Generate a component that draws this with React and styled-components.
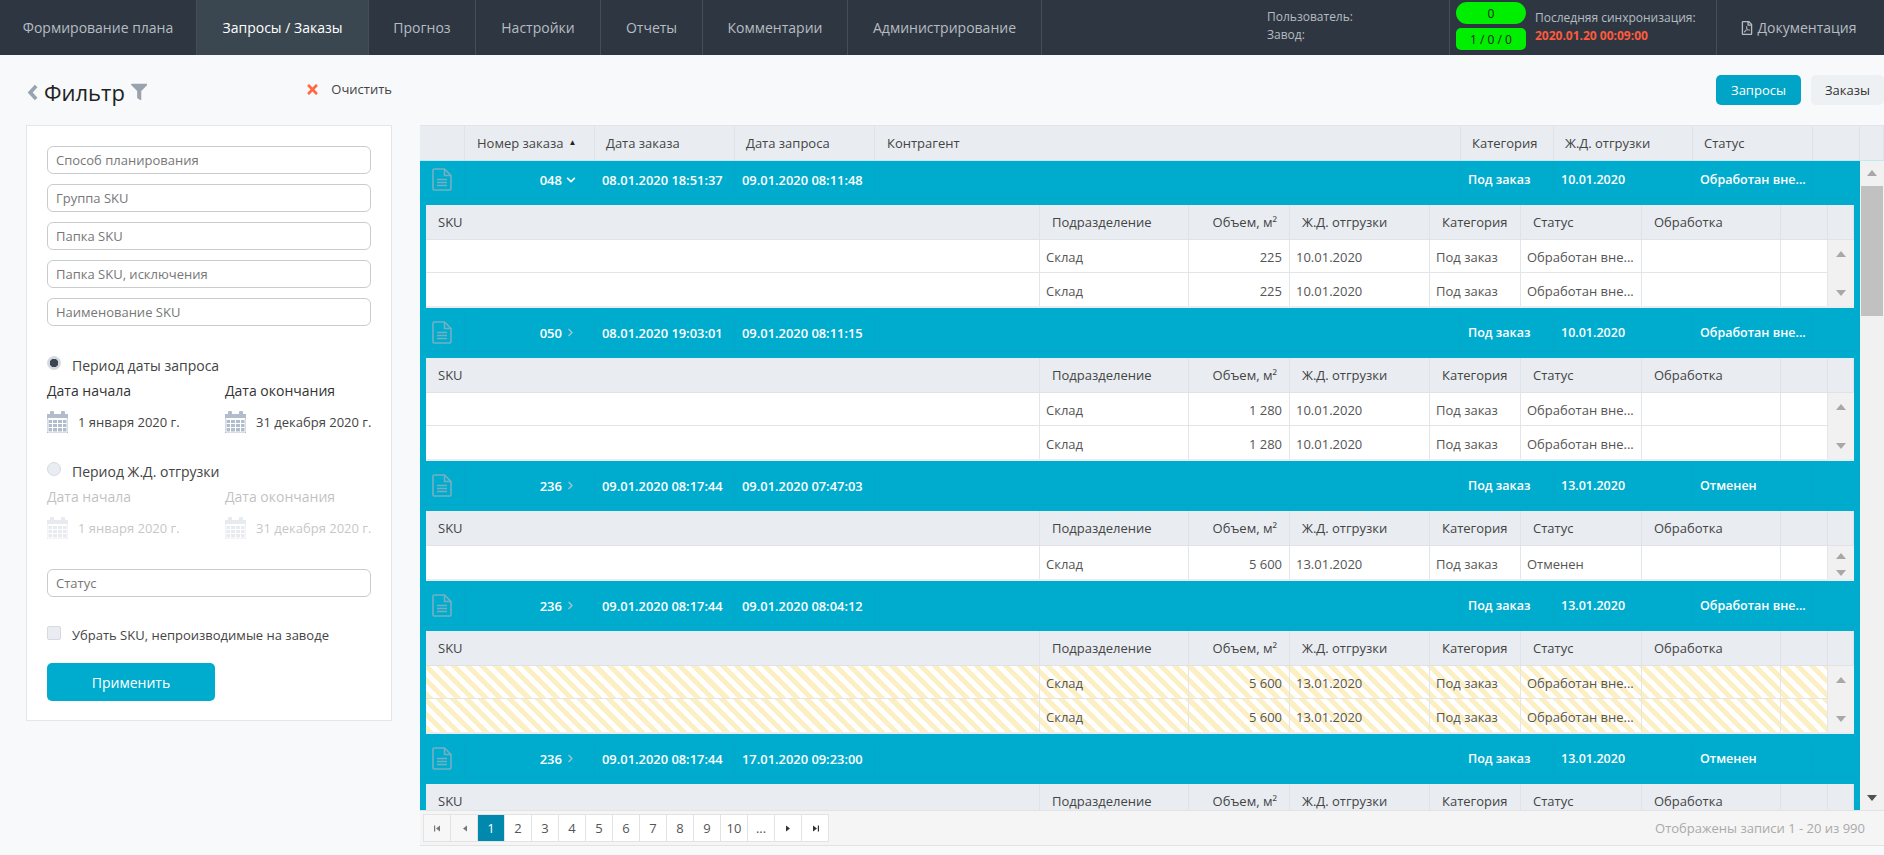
import React from 'react';
import styled, { createGlobalStyle } from 'styled-components';
import { FaChevronDown, FaChevronRight, FaFilter, FaTimes, FaRegFilePdf } from 'react-icons/fa';

const GlobalStyle = createGlobalStyle`
	html, body {
		margin: 0;
		padding: 0;
		background: #f8f9fb;
		font-family: "Open Sans", "Liberation Sans", sans-serif;
		overflow: hidden;
	}
	* { box-sizing: border-box; }
`;

const Page = styled.div`
	width: 1884px;
	height: 855px;
	overflow: hidden;
	display: flex;
	flex-direction: column;
`;

// верхнее меню
const TopBar = styled.div`
	height: 55px;
	flex: none;
	display: flex;
	background: #2e3741;
	color: #b6bcc2;
	font-size: 14px;
`;

const Tab = styled.div`
	width: ${(p) => p.$w}px;
	display: flex;
	align-items: center;
	justify-content: center;
	border-right: 1px solid #444e58;
	background: ${(p) => (p.$active ? '#3a4750' : 'transparent')};
	color: ${(p) => (p.$active ? '#ffffff' : '#b6bcc2')};
	font-weight: ${(p) => (p.$active ? 500 : 400)};
`;

const UserInfo = styled.div`
	width: 408px;
	padding: 8px 0 0 225px;
	font-size: 12px;
	line-height: 18px;
	border-right: 1px solid #444e58;
`;

const Counters = styled.div`
	width: 85px;
	padding: 2px 0 0 6px;
	display: flex;
	flex-direction: column;
	gap: 4px;
`;

const Counter = styled.div`
	width: 70px;
	height: 22px;
	background: #00ee00;
	color: #222;
	border-radius: ${(p) => p.$r}px;
	font-size: 12px;
	display: flex;
	align-items: center;
	justify-content: center;
`;

const Sync = styled.div`
	width: 182px;
	border-right: 1px solid #444e58;
	font-size: 12px;
	padding-top: 9px;
	line-height: 18px;
`;

const SyncDate = styled.div`
	color: #ff5a3c;
	font-weight: 700;
`;

const DocLink = styled.div`
	flex: 1;
	display: flex;
	align-items: center;
	justify-content: center;
	gap: 3px;
	padding-right: 4px;
	font-size: 14px;
`;

const Main = styled.div`
	flex: 1;
	display: flex;
	min-height: 0;
`;

// левая панель фильтра
const Side = styled.div`
	width: 420px;
	flex: none;
	padding: 0 28px 0 26px;
`;

const SideHead = styled.div`
	height: 70px;
	display: flex;
	align-items: center;
	padding: 4px 0 0 1px;
	color: #222;
`;

const FilterTitle = styled.div`
	font-size: 22px;
	margin: 0 6px 0 6px;
`;

const ClearBtn = styled.div`
	display: flex;
	align-items: center;
	gap: 11px;
	margin: 0 0 6px 158px;
	font-size: 13px;
	color: #444;
`;

const FilterPanel = styled.div`
	width: 366px;
	height: 596px;
	background: #fff;
	border: 1px solid #e3e6ea;
	padding: 20px 20px 0;
`;

const TextInput = styled.input`
	display: block;
	width: 324px;
	height: 28px;
	margin-top: ${(p) => p.$top || 0}px;
	margin-bottom: 10px;
	padding: 0 8px;
	border: 1px solid #c9cccf;
	border-radius: 6px;
	outline: none;
	font: 13px "Open Sans", sans-serif;
	background: #fff;
	&::placeholder {
		color: #777;
		opacity: 1;
	}
`;

const RadioRow = styled.label`
	display: flex;
	align-items: center;
	height: 18px;
	margin-top: ${(p) => p.$top}px;
	font-size: ${(p) => p.$size || 14}px;
	color: #444;
	gap: 11px;
`;

const Radio = styled.span`
	width: 14px;
	height: 14px;
	margin-top: -5px;
	border-radius: 50%;
	border: 1px solid #d6dae0;
	background: ${(p) => (p.$on ? 'radial-gradient(circle, #3b4450 0 4px, #d4d8de 4.5px)' : '#e9edf2')};
`;

const Check = styled.span`
	width: 14px;
	height: 14px;
	margin-top: -5px;
	border-radius: 2px;
	border: 1px solid #d6dae0;
	background: #e9edf2;
`;

const DateGrid = styled.div`
	display: grid;
	grid-template-columns: 178px 1fr;
	margin-top: 8px;
	opacity: ${(p) => (p.$off ? 0.3 : 1)};
`;

const DateLabel = styled.div`
	font-size: 14px;
	line-height: 18px;
	color: #333;
`;

const DateValue = styled.div`
	display: flex;
	align-items: center;
	height: 22px;
	margin-top: 11px;
	font-size: 13px;
	color: #444;
	gap: 10px;
	white-space: nowrap;
`;

const ApplyBtn = styled.div`
	width: 168px;
	height: 38px;
	margin-top: 19px;
	background: #00acce;
	color: #fff;
	border-radius: 5px;
	font-size: 14px;
	font-weight: 500;
	display: flex;
	align-items: center;
	justify-content: center;
`;

// правая часть с таблицей
const Content = styled.div`
	flex: 1;
	min-width: 0;
	display: flex;
	flex-direction: column;
`;

const ModeBar = styled.div`
	height: 70px;
	flex: none;
	display: flex;
	gap: 10px;
	padding: 20px 0 0 1296px;
`;

const ModeBtn = styled.div`
	width: ${(p) => p.$w}px;
	flex: none;
	height: 30px;
	border-radius: 5px;
	background: ${(p) => (p.$active ? '#00a4c6' : '#eef1f4')};
	color: ${(p) => (p.$active ? '#fff' : '#333')};
	font-size: 13px;
	display: flex;
	align-items: center;
	justify-content: center;
`;

const HeadRow = styled.div`
	height: 36px;
	flex: none;
	display: flex;
	background: #e9edf2;
	border-top: 1px solid #e1e4e8;
	border-bottom: 1px solid #c4e8f1;
`;

const HeadCell = styled.div`
	width: ${(p) => p.$w}px;
	flex: ${(p) => (p.$w ? 'none' : 1)};
	padding: 0 ${(p) => p.$pad ?? 11}px;
	display: flex;
	align-items: center;
	gap: 5px;
	justify-content: ${(p) => (p.$right ? 'flex-end' : 'flex-start')};
	font-size: 13px;
	color: #444;
	border-right: 1px solid #dfe3e8;
	white-space: nowrap;
`;

const SortMark = styled.span`
	font-size: 8px;
	color: #222;
	margin-bottom: 3px;
`;

const BodyArea = styled.div`
	height: 649px;
	flex: none;
	display: flex;
`;

const Scroller = styled.div`
	width: 1440px;
	overflow: hidden;
	background: #00acce;
`;

const OrderRow = styled.div`
	display: flex;
	height: 38px;
	margin-top: ${(p) => (p.$first ? 0 : 6)}px;
	margin-bottom: 6px;
	border-bottom: 1px solid #08a5c6;
`;

const OrderCell = styled.div`
	width: ${(p) => p.$w}px;
	flex: none;
	padding: 0 6px 0 7px;
	display: flex;
	align-items: center;
	gap: 5px;
	border-right: 1px solid #08a5c6;
	color: #fff;
	font-size: ${(p) => p.$size || 12.5}px;
	font-weight: 600;
	white-space: nowrap;
`;

const IconCell = styled(OrderCell)`
	justify-content: center;
	padding: 0;
`;

const NumberCell = styled(OrderCell)`
	justify-content: flex-end;
	gap: 4px;
	padding: 0 18px 0 0;
	font-size: 13px;
`;

const ChevronSlot = styled.span`
	width: 10px;
	display: flex;
	align-items: center;
`;

const Nested = styled.div`
	margin: 0 6px;
	background: #e9edf2;
	padding-bottom: 2px;
`;

const NestedHead = styled.div`
	height: 35px;
	display: flex;
	border-bottom: 1px solid #dfe3e8;
`;

const NestedBody = styled.div`
	display: flex;
`;

const NestedRows = styled.div`
	width: 1402px;
`;

const NestedRow = styled.div`
	height: 33px;
	display: flex;
	border-bottom: 1px solid #e3e5e8;
	background: ${(p) =>
		p.$warn
			? 'repeating-linear-gradient(45deg, #fdefc4 0 5px, #ffffff 5px 10px)'
			: '#fff'};
	&:last-child {
		border-bottom: 0;
	}
`;

const NestedCell = styled.div`
	width: ${(p) => p.$w}px;
	flex: none;
	padding: 2px 7px 0 6px;
	display: flex;
	align-items: center;
	justify-content: ${(p) => (p.$right ? 'flex-end' : 'flex-start')};
	border-right: 1px solid #e3e5e8;
	font-size: 13px;
	color: #555;
	white-space: nowrap;
`;

const InnerScroll = styled.div`
	width: 26px;
	display: flex;
	flex-direction: column;
	align-items: center;
	justify-content: space-between;
	padding: ${(p) => (p.$compact ? '7px 0 3px' : '11px 0 10px')};
	background: #f1f1f1;
`;

const ArrowUp = styled.span`
	width: 0;
	height: 0;
	border-left: 5px solid transparent;
	border-right: 5px solid transparent;
	border-bottom: 6px solid ${(p) => p.$c || '#a8a8a8'};
`;

const ArrowDown = styled.span`
	width: 0;
	height: 0;
	border-left: 5px solid transparent;
	border-right: 5px solid transparent;
	border-top: 6px solid ${(p) => p.$c || '#a8a8a8'};
`;

const MainScroll = styled.div`
	width: 24px;
	flex: none;
	display: flex;
	flex-direction: column;
	align-items: center;
	background: #f1f1f1;
	padding: 9px 0;
`;

const Thumb = styled.div`
	width: 22px;
	height: 130px;
	margin-top: 10px;
	background: #c1c1c1;
`;

const Filler = styled.div`
	flex: 1;
`;

const Pager = styled.div`
	height: 36px;
	flex: none;
	display: flex;
	align-items: center;
	justify-content: space-between;
	padding: 0 19px 0 3px;
	background: #f5f5f5;
	border-top: 1px solid #e3e3e3;
	border-bottom: 1px solid #e3e3e3;
`;

const PageList = styled.div`
	display: flex;
	border-left: 1px solid #e3e3e3;
`;

const PageBtn = styled.div`
	width: 27px;
	height: 28px;
	display: flex;
	align-items: center;
	justify-content: center;
	background: ${(p) => (p.$active ? '#0089ac' : p.$muted ? '#f7f7f7' : '#fff')};
	color: ${(p) => (p.$active ? '#fff' : '#555')};
	border: 1px solid #e3e3e3;
	border-left: 0;
	font-size: 13px;
`;

const PagerInfo = styled.div`
	font-size: 13px;
	color: #aaa;
`;

const BackIcon = () => (
	<svg width="12" height="17" viewBox="0 0 12 17" fill="none" stroke="#98a3ae" strokeWidth="4">
		<path d="M10 1.5L3.5 8.5L10 15.5" />
	</svg>
);

const DocIcon = () => (
	<svg width="20" height="23" viewBox="0 0 20 23" fill="none" stroke="#74b0c2" strokeWidth="1.6">
		<path d="M1 2.2C1 1.5 1.5 1 2.2 1H12.5L19 7.5V20.8C19 21.5 18.5 22 17.8 22H2.2C1.5 22 1 21.5 1 20.8Z" />
		<path d="M12.5 1V7.5H19" />
		<path d="M5 11.5H15M5 14.5H15M5 17.5H15" />
	</svg>
);

const CalendarIcon = () => (
	<svg width="21" height="22" viewBox="0 0 21 22">
		<path fill="#b1bdcd" d="M0 3H3V1.5a2 2 0 0 1 4 0V3h7V1.5a2 2 0 0 1 4 0V3h3v19H0Z" />
		<g stroke="#fff" strokeWidth="1">
			<path d="M1.5 8.5H19.5M1.5 12.5H19.5M1.5 16.5H19.5" />
			<path d="M5.5 7V21M10.5 7V21M15.5 7V21" />
		</g>
		<path d="M1 7.5H20V21H1Z" fill="none" stroke="#fff" strokeWidth="1" />
	</svg>
);

const PagerGlyph = ({ dir, bar, color }) => (
	<svg width="9" height="9" viewBox="0 0 9 9" fill={color}>
		{dir === 'left' ? <path d="M7 1.5V7.5L3 4.5Z" /> : <path d="M2 1.5V7.5L6 4.5Z" />}
		{bar && (dir === 'left' ? <rect x="1" y="1.5" width="1.2" height="6" /> : <rect x="6.8" y="1.5" width="1.2" height="6" />)}
	</svg>
);

const topCols = [45, 130, 140, 140, 586, 93, 139, 120, 47];
const innerCols = [614, 149, 101, 140, 91, 121, 139, 47];
const innerTitles = ['SKU', 'Подразделение', 'Объем, м²', 'Ж.Д. отгрузки', 'Категория', 'Статус', 'Обработка', ''];

// у последней группы строки ниже края таблицы, их не видно
const groups = [
	{ num: '048', open: true, order: '08.01.2020 18:51:37', req: '09.01.2020 08:11:48', ship: '10.01.2020', status: 'Обработан вне...', vol: '225', rows: 2 },
	{ num: '050', order: '08.01.2020 19:03:01', req: '09.01.2020 08:11:15', ship: '10.01.2020', status: 'Обработан вне...', vol: '1 280', rows: 2 },
	{ num: '236', order: '09.01.2020 08:17:44', req: '09.01.2020 07:47:03', ship: '13.01.2020', status: 'Отменен', vol: '5 600', rows: 1 },
	{ num: '236', order: '09.01.2020 08:17:44', req: '09.01.2020 08:04:12', ship: '13.01.2020', status: 'Обработан вне...', vol: '5 600', rows: 2, warn: true },
	{ num: '236', order: '09.01.2020 08:17:44', req: '17.01.2020 09:23:00', ship: '13.01.2020', status: 'Отменен', vol: '5 600', rows: 0 },
];

const tabs = [
	['Формирование плана', 197],
	['Запросы / Заказы', 172, true],
	['Прогноз', 107],
	['Настройки', 125],
	['Отчеты', 102],
	['Комментарии', 145],
	['Администрирование', 194],
];

const DateBlock = ({ off }) => (
	<DateGrid $off={off}>
		<DateLabel>Дата начала</DateLabel>
		<DateLabel>Дата окончания</DateLabel>
		<DateValue><CalendarIcon />1 января 2020 г.</DateValue>
		<DateValue><CalendarIcon />31 декабря 2020 г.</DateValue>
	</DateGrid>
);

const OrderGroup = ({ g, first }) => (
	<div>
		<OrderRow $first={first}>
			<IconCell $w={topCols[0]}><DocIcon /></IconCell>
			<NumberCell $w={topCols[1]}>
				{g.num}
				<ChevronSlot>
					{g.open ? <FaChevronDown size={10} color="#fff" /> : <FaChevronRight size={9} color="#a3c2cb" />}
				</ChevronSlot>
			</NumberCell>
			<OrderCell $w={topCols[2]} $size={12.9}>{g.order}</OrderCell>
			<OrderCell $w={topCols[3]} $size={12.9}>{g.req}</OrderCell>
			<OrderCell $w={topCols[4]} />
			<OrderCell $w={topCols[5]}>Под заказ</OrderCell>
			<OrderCell $w={topCols[6]}>{g.ship}</OrderCell>
			<OrderCell $w={topCols[7]}>{g.status}</OrderCell>
			<OrderCell $w={topCols[8]} />
		</OrderRow>
		<Nested>
			<NestedHead>
				{innerTitles.map((t, i) => (
					<HeadCell key={i} $w={innerCols[i]} $right={i === 2} $pad={12}>{t}</HeadCell>
				))}
				<HeadCell $w={26} />
			</NestedHead>
			{g.rows > 0 && (
				<NestedBody>
					<NestedRows>
						{Array.from({ length: g.rows }).map((_, r) => (
							<NestedRow key={r} $warn={g.warn}>
								<NestedCell $w={innerCols[0]} />
								<NestedCell $w={innerCols[1]}>Склад</NestedCell>
								<NestedCell $w={innerCols[2]} $right>{g.vol}</NestedCell>
								<NestedCell $w={innerCols[3]}>{g.ship}</NestedCell>
								<NestedCell $w={innerCols[4]}>Под заказ</NestedCell>
								<NestedCell $w={innerCols[5]}>{g.status}</NestedCell>
								<NestedCell $w={innerCols[6]} />
								<NestedCell $w={innerCols[7]} />
							</NestedRow>
						))}
					</NestedRows>
					<InnerScroll $compact={g.rows === 1}>
						<ArrowUp />
						<ArrowDown />
					</InnerScroll>
				</NestedBody>
			)}
		</Nested>
	</div>
);

const App = () => {
	const pages = ['1', '2', '3', '4', '5', '6', '7', '8', '9', '10', '...'];
	return (
		<Page>
			<GlobalStyle />
			<TopBar>
				{tabs.map(([title, w, active]) => (
					<Tab key={title} $w={w} $active={active}>{title}</Tab>
				))}
				<UserInfo>
					<div>Пользователь:</div>
					<div>Завод:</div>
				</UserInfo>
				<Counters>
					<Counter $r={11}>0</Counter>
					<Counter $r={5}>1 / 0 / 0</Counter>
				</Counters>
				<Sync>
					<div>Последняя синхронизация:</div>
					<SyncDate>2020.01.20 00:09:00</SyncDate>
				</Sync>
				<DocLink><FaRegFilePdf size={14} />Документация</DocLink>
			</TopBar>
			<Main>
				<Side>
					<SideHead>
						<BackIcon />
						<FilterTitle>Фильтр</FilterTitle>
						<FaFilter size={18} color="#98a3ae" />
						<ClearBtn><FaTimes size={15} color="#ff6a45" />Очистить</ClearBtn>
					</SideHead>
					<FilterPanel>
						<TextInput placeholder="Способ планирования" />
						<TextInput placeholder="Группа SKU" />
						<TextInput placeholder="Папка SKU" />
						<TextInput placeholder="Папка SKU, исключения" />
						<TextInput placeholder="Наименование SKU" />
						<RadioRow $top={30}><Radio $on />Период даты запроса</RadioRow>
						<DateBlock />
						<RadioRow $top={29}><Radio />Период Ж.Д. отгрузки</RadioRow>
						<DateBlock off />
						<TextInput $top={30} placeholder="Статус" />
						<RadioRow $top={29} $size={13}><Check />Убрать SKU, непроизводимые на заводе</RadioRow>
						<ApplyBtn>Применить</ApplyBtn>
					</FilterPanel>
				</Side>
				<Content>
					<ModeBar>
						<ModeBtn $w={85} $active>Запросы</ModeBtn>
						<ModeBtn $w={73}>Заказы</ModeBtn>
					</ModeBar>
					<HeadRow>
						<HeadCell $w={topCols[0]} />
						<HeadCell $w={topCols[1]} $pad={12}>Номер заказа <SortMark>▲</SortMark></HeadCell>
						<HeadCell $w={topCols[2]}>Дата заказа</HeadCell>
						<HeadCell $w={topCols[3]}>Дата запроса</HeadCell>
						<HeadCell $w={topCols[4]} $pad={12}>Контрагент</HeadCell>
						<HeadCell $w={topCols[5]}>Категория</HeadCell>
						<HeadCell $w={topCols[6]}>Ж.Д. отгрузки</HeadCell>
						<HeadCell $w={topCols[7]}>Статус</HeadCell>
						<HeadCell $w={topCols[8]} />
						<HeadCell $w={24} />
					</HeadRow>
					<BodyArea>
						<Scroller>
							{groups.map((g, i) => (
								<OrderGroup key={i} g={g} first={i === 0} />
							))}
						</Scroller>
						<MainScroll>
							<ArrowUp />
							<Thumb />
							<Filler />
							<ArrowDown $c="#505050" />
						</MainScroll>
					</BodyArea>
					<Pager>
						<PageList>
							<PageBtn $muted><PagerGlyph dir="left" bar color="#777" /></PageBtn>
							<PageBtn $muted><PagerGlyph dir="left" color="#777" /></PageBtn>
							{pages.map((p, i) => (
								<PageBtn key={p} $active={i === 0}>{p}</PageBtn>
							))}
							<PageBtn><PagerGlyph dir="right" color="#333" /></PageBtn>
							<PageBtn><PagerGlyph dir="right" bar color="#333" /></PageBtn>
						</PageList>
						<PagerInfo>Отображены записи 1 - 20 из 990</PagerInfo>
					</Pager>
				</Content>
			</Main>
		</Page>
	);
};

export default App;
